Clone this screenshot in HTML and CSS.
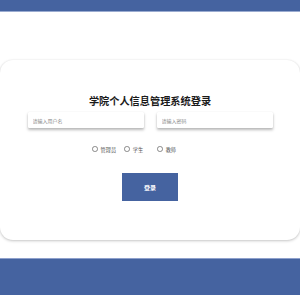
FILE: index.html
```html
<!DOCTYPE html>
<html lang="zh">
<head>
<meta charset="utf-8">
<link rel="stylesheet" href="styles.css">
</head>
<body>
<header class="topbar"></header>
<main class="stage">
  <section class="card">
    <h1 class="title">学院个人信息管理系统登录</h1>
    <div class="fields">
      <input class="field" type="text" placeholder="请输入用户名">
      <input class="field" type="password" placeholder="请输入密码">
    </div>
    <div class="roles">
      <label class="role"><span class="dot"></span>管理员</label>
      <label class="role"><span class="dot"></span>学生</label>
      <label class="role role-wide"><span class="dot"></span>教师</label>
    </div>
    <button class="submit" type="button">登录</button>
  </section>
</main>
<footer class="bottombar"></footer>
</body>
</html>
```

FILE: styles.css
```css
html, body {
  margin: 0;
  padding: 0;
  background: #ffffff;
  font-family: "Noto Sans CJK SC", "Noto Sans", sans-serif;
}
.topbar {
  height: 11px;
  background: #4563a0;
  border-bottom: 1px solid #9aabd0;
}
.stage {
  padding-top: 48px;
}
.card {
  width: 300px;
  height: 180px;
  box-sizing: border-box;
  border-radius: 13px;
  background: #fff;
  box-shadow: 0 1px 3px rgba(0,0,0,0.22), 0 0 2px rgba(0,0,0,0.06);
  display: flex;
  flex-direction: column;
  align-items: center;
  padding-top: 34px;
}
.title {
  margin: 0;
  font-size: 10.2px;
  line-height: 14px;
  font-weight: 700;
  color: #1a1a1a;
}
.fields {
  display: flex;
  gap: 13px;
  margin-top: 4px;
}
.field {
  width: 116px;
  height: 16px;
  box-sizing: border-box;
  border: none;
  border-radius: 1px;
  padding: 0 5px;
  font-family: inherit;
  font-size: 5px;
  color: #555;
  background: #fff;
  box-shadow: 0 2px 3px rgba(0,0,0,0.28), 0 0 1px rgba(0,0,0,0.12);
  outline: none;
}
.field::placeholder {
  color: #8a8a8a;
}
.roles {
  display: flex;
  gap: 8px;
  margin-top: 16px;
  height: 10px;
  align-items: center;
  margin-left: -32px;
}
.role {
  display: flex;
  align-items: center;
  gap: 3px;
  font-size: 5.2px;
  color: #555;
}
.role-wide {
  margin-left: 6px;
}
.dot {
  width: 3.6px;
  height: 3.6px;
  border: 0.7px solid #888;
  border-radius: 50%;
}
.submit {
  margin-top: 19px;
  width: 56px;
  height: 28px;
  border: none;
  background: #4563a0;
  color: #fff;
  font-family: inherit;
  font-size: 6px;
  font-weight: 700;
  padding: 0;
}
.bottombar {
  margin-top: 18px;
  height: 36px;
  background: #4563a0;
  border-top: 1px solid #8ea0cc;
}
```
